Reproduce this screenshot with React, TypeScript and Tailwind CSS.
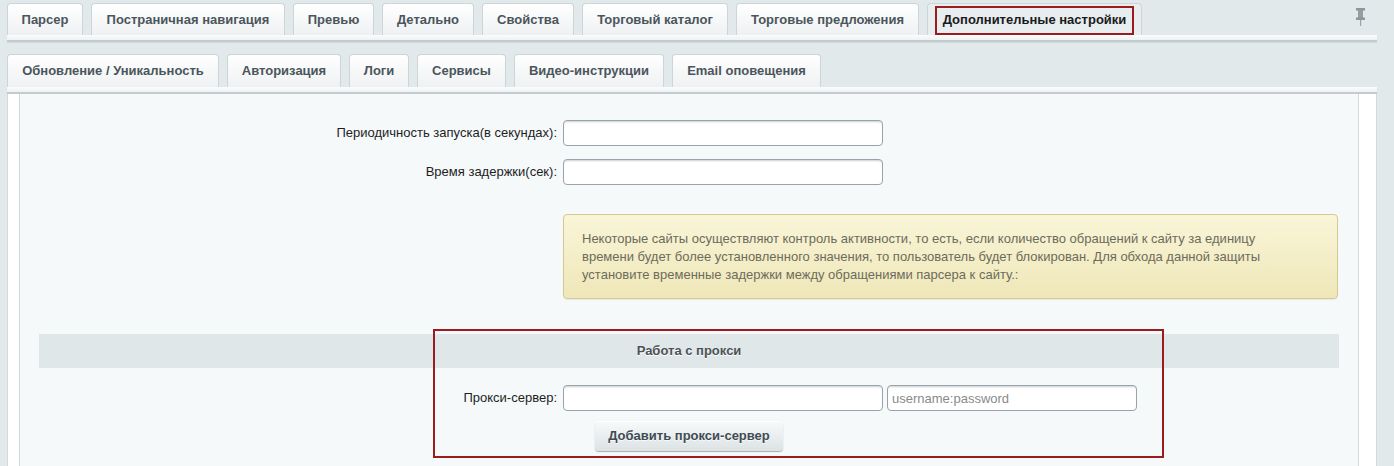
import React from "react";

const row1 = [
  { t: "Парсер", w: 76 },
  { t: "Постраничная навигация", w: 194 },
  { t: "Превью", w: 81 },
  { t: "Детально", w: 92 },
  { t: "Свойства", w: 92 },
  { t: "Торговый каталог", w: 146 },
  { t: "Торговые предложения", w: 183 },
];

const row2 = [
  { t: "Обновление / Уникальность", w: 212 },
  { t: "Авторизация", w: 114 },
  { t: "Логи", w: 60 },
  { t: "Сервисы", w: 89 },
  { t: "Видео-инструкции", w: 150 },
  { t: "Email оповещения", w: 149 },
];

function Tab({ t, w, h }: { t: string; w: number; h: number }) {
  return (
    <div
      className="flex items-center justify-center rounded-t-[4px] border border-b-0 border-[#cdd5d8] bg-gradient-to-b from-[#ffffff] to-[#eef1f2] text-[13px] font-bold text-[#4b555c] whitespace-nowrap"
      style={{ width: w, height: h }}
    >
      {t}
    </div>
  );
}

function Band() {
  return (
    <div className="w-[1370px] h-[7px] bg-gradient-to-b from-[#fbfcfc] to-[#eef2f3] border-b-[2px] border-[#c3cbcf] shadow-[0_1px_1px_rgba(0,0,0,0.06)]" />
  );
}

const inputCls =
  "h-[26px] rounded-[4px] border border-[#9aa3ab] bg-white shadow-[inset_0_2px_2px_-1px_rgba(180,188,191,0.7)] outline-none px-[4px] text-[13px] text-[#333]";

function Pin() {
  return (
    <svg width="9" height="18" viewBox="0 0 9 18" className="block">
      <rect x="0" y="0" width="9" height="2.5" fill="#8c969b" />
      <rect x="2" y="2" width="5" height="8" fill="#939da2" />
      <rect x="0" y="9.5" width="9" height="2.5" fill="#8c969b" />
      <rect x="4" y="12" width="1.2" height="6" fill="#9aa3a8" />
    </svg>
  );
}

export default function App() {
  return (
    <div
      className="w-[1394px] h-[466px] overflow-hidden bg-[#e2e9eb] text-[13px]"
      style={{ fontFamily: '"Liberation Sans", Arial, sans-serif' }}
    >
      <div className="pl-[7px]">
        {/* Row 1 tabs */}
        <div className="flex items-end gap-[8px] pt-[3px] w-[1370px]">
          {row1.map((x) => (
            <Tab key={x.t} t={x.t} w={x.w} h={32} />
          ))}
          <div className="relative flex h-[32px] w-[215px] items-center justify-center rounded-t-[4px] border border-b-0 border-[#cdd5d8] bg-[#e8edef] text-[13px] font-bold text-[#1a1a1a] whitespace-nowrap">
            Дополнительные настройки
            <div className="pointer-events-none absolute left-[7px] right-[7px] top-[2px] bottom-[0px] border-2 border-[#9b1c1f]" />
          </div>
          <div className="ml-auto mr-[12px] self-start pt-[5px]">
            <Pin />
          </div>
        </div>
        <Band />

        {/* Row 2 tabs */}
        <div className="flex items-end gap-[8px] pt-[12px]">
          {row2.map((x) => (
            <Tab key={x.t} t={x.t} w={x.w} h={33} />
          ))}
        </div>
        <Band />

        {/* Content panel */}
        <div className="flex w-[1370px] h-[380px] bg-white border-x border-[#d3dadd]">
          <div className="w-[11px]" />
          <div className="w-[1340px] border-x border-[#d3dadd] bg-[#f5f9fa] px-[19px] pt-[26px]">
            <div className="flex items-center h-[26px]">
              <div className="w-[520px] pr-[2px] text-right text-[#1e1e1e] whitespace-nowrap">
                Периодичность запуска(в секундах):
              </div>
              <input className={inputCls + " ml-[4px] w-[320px]"} />
            </div>
            <div className="flex items-center h-[26px] mt-[13px]">
              <div className="w-[520px] pr-[2px] text-right text-[#1e1e1e] whitespace-nowrap">
                Время задержки(сек):
              </div>
              <input className={inputCls + " ml-[4px] w-[320px]"} />
            </div>

            <div className="mt-[29px] ml-[524px] w-[775px] rounded-[4px] border border-[#d5c990] bg-gradient-to-b from-[#f9f5d8] to-[#efe7b8] pl-[18px] pt-[15px] pb-[14px] text-[13px] leading-[18px] text-[#6d6b5b] shadow-[0_1px_1px_rgba(0,0,0,0.06)]">
              <div className="whitespace-nowrap">
                Некоторые сайты осуществляют контроль активности, то есть, если количество обращений к сайту за единицу
              </div>
              <div className="whitespace-nowrap">
                времени будет более установленного значения, то пользователь будет блокирован. Для обхода данной защиты
              </div>
              <div className="whitespace-nowrap">
                установите временные задержки между обращениями парсера к сайту.:
              </div>
            </div>

            <div className="relative mt-[35px]">
              <div className="flex h-[34px] items-center justify-center bg-[#e0e7e9] font-bold text-[#4b5256] [text-shadow:0_1px_0_#fff]">
                Работа с прокси
              </div>
              <div className="flex items-center h-[26px] mt-[17px]">
                <div className="w-[520px] pr-[2px] text-right text-[#1e1e1e] whitespace-nowrap">
                  Прокси-сервер:
                </div>
                <input className={inputCls + " ml-[4px] w-[320px]"} />
                <input
                  className={inputCls + " ml-[4px] w-[250px] placeholder:text-[#8a8a8a]"}
                  placeholder="username:password"
                />
              </div>
              <div className="flex justify-center mt-[10px]">
                <button className="h-[30px] w-[188px] rounded-[4px] bg-gradient-to-b from-[#f8fafa] to-[#dce2e5] text-[13px] font-bold text-[#3f4b54] shadow-[0_0_1px_rgba(0,0,0,0.11),0_1px_1px_rgba(0,0,0,0.3),inset_0_1px_#fff] [text-shadow:0_1px_rgba(255,255,255,0.7)]">
                  Добавить прокси-сервер
                </button>
              </div>
              <div className="pointer-events-none absolute left-[394px] top-[-5px] w-[731px] h-[129px] border-2 border-[#9b1c1f]" />
            </div>
          </div>
        </div>
      </div>
    </div>
  );
}
